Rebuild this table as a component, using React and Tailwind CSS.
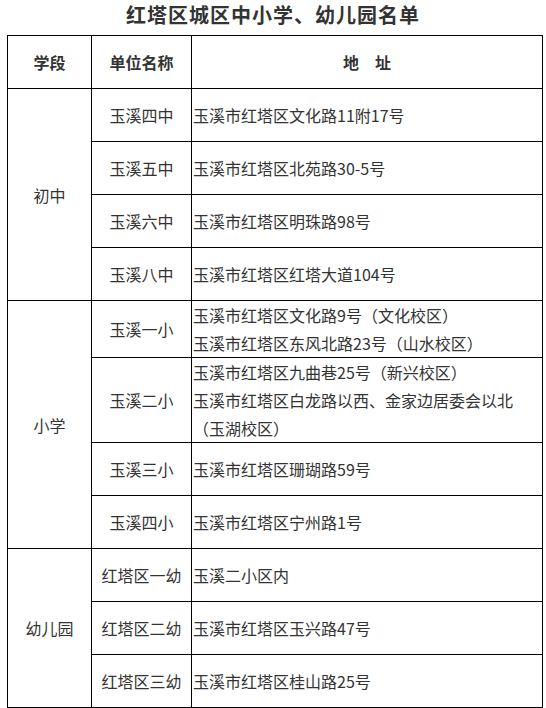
const sections = [
  {
    stage: '初中',
    rows: [
      { name: '玉溪四中', addr: ['玉溪市红塔区文化路11附17号'], h: 'h-[53px]' },
      { name: '玉溪五中', addr: ['玉溪市红塔区北苑路30-5号'], h: 'h-[53px]' },
      { name: '玉溪六中', addr: ['玉溪市红塔区明珠路98号'], h: 'h-[53px]' },
      { name: '玉溪八中', addr: ['玉溪市红塔区红塔大道104号'], h: 'h-[53px]' },
    ],
  },
  {
    stage: '小学',
    rows: [
      {
        name: '玉溪一小',
        addr: ['玉溪市红塔区文化路9号（文化校区）', '玉溪市红塔区东风北路23号（山水校区）'],
        h: 'h-[57px]',
      },
      {
        name: '玉溪二小',
        addr: ['玉溪市红塔区九曲巷25号（新兴校区）', '玉溪市红塔区白龙路以西、金家边居委会以北', '（玉湖校区）'],
        h: 'h-[84px]',
      },
      { name: '玉溪三小', addr: ['玉溪市红塔区珊瑚路59号'], h: 'h-[53px]' },
      { name: '玉溪四小', addr: ['玉溪市红塔区宁州路1号'], h: 'h-[53px]' },
    ],
  },
  {
    stage: '幼儿园',
    rows: [
      { name: '红塔区一幼', addr: ['玉溪二小区内'], h: 'h-[53px]' },
      { name: '红塔区二幼', addr: ['玉溪市红塔区玉兴路47号'], h: 'h-[53px]' },
      { name: '红塔区三幼', addr: ['玉溪市红塔区桂山路25号'], h: 'h-[53px]' },
    ],
  },
];

export default function App() {
  return (
    <div
      className="w-[546px] h-[708px] bg-white text-[#333]"
      style={{ fontFamily: '"Noto Sans CJK SC", "Noto Sans", sans-serif' }}
    >
      {/* Title */}
      <div className="h-[35px] flex items-center justify-center">
        <h1 className="text-[20px] font-semibold tracking-[1px] leading-none -mt-[5px]">
          红塔区城区中小学、幼儿园名单
        </h1>
      </div>

      {/* Table */}
      <table className="ml-[7px] w-[536px] border-collapse table-fixed text-[16px]">
        <colgroup>
          <col className="w-[84px]" />
          <col className="w-[100px]" />
          <col />
        </colgroup>
        <thead>
          <tr className="h-[53px]">
            <th className="border border-black font-bold text-center">学段</th>
            <th className="border border-black font-bold text-center">单位名称</th>
            <th className="border border-black font-bold text-center">地　址</th>
          </tr>
        </thead>
        <tbody>
          {sections.map((sec) =>
            sec.rows.map((row, i) => (
              <tr key={row.name} className={row.h}>
                {i === 0 && (
                  <td rowSpan={sec.rows.length} className="border border-black text-center align-middle">
                    {sec.stage}
                  </td>
                )}
                <td className="border border-black text-center align-middle whitespace-nowrap">{row.name}</td>
                <td className="border border-black pl-[1px] align-middle leading-[28px] whitespace-nowrap">
                  {row.addr.map((line) => (
                    <div key={line}>{line}</div>
                  ))}
                </td>
              </tr>
            ))
          )}
        </tbody>
      </table>
    </div>
  );
}
